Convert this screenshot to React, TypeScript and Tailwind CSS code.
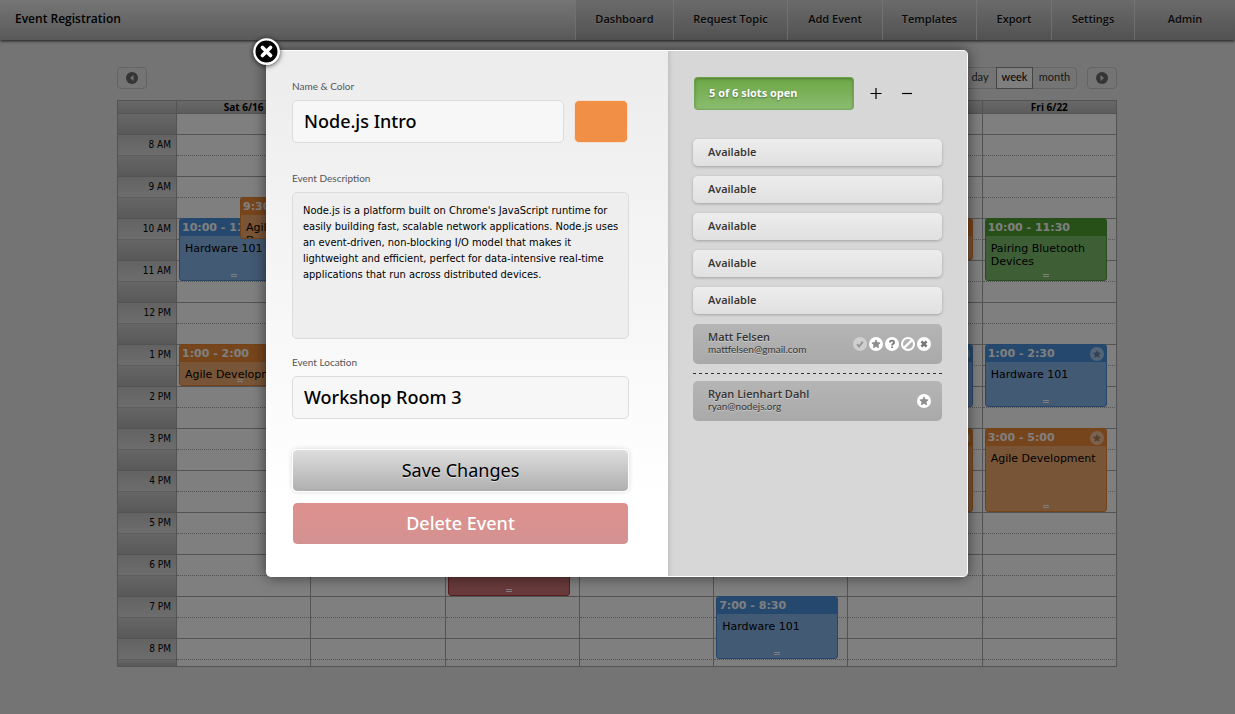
import React from 'react';

type Color = 'blue' | 'orange' | 'green' | 'red';

type CalendarEvent = {
  start: number;
  end: number;
  title: string;
  color: Color;
  starred?: boolean;
  place?: 'under' | 'over';
};

const FIRST_HOUR = 7.5;
const HOUR_HEIGHT = 42;

const navItems = [
  { label: 'Dashboard', width: 'w-[98px]' },
  { label: 'Request Topic', width: 'w-[114px]' },
  { label: 'Add Event', width: 'w-[95px]' },
  { label: 'Templates', width: 'w-[94px]' },
  { label: 'Export', width: 'w-[75px]' },
  { label: 'Settings', width: 'w-[83px]' },
  { label: 'Admin', width: 'w-[101px]' },
];

const days: { label: string; events: CalendarEvent[] }[] = [
  {
    label: 'Sat 6/16',
    events: [
      { start: 10, end: 11.5, title: 'Hardware 101', color: 'blue', place: 'under' },
      { start: 13, end: 14, title: 'Agile Development', color: 'orange' },
      { start: 9.5, end: 10.5, title: 'Agile Development', color: 'orange', place: 'over' },
    ],
  },
  { label: 'Sun 6/17', events: [] },
  { label: 'Mon 6/18', events: [{ start: 17, end: 19, title: 'Open Lab', color: 'red' }] },
  { label: 'Tue 6/19', events: [] },
  { label: 'Wed 6/20', events: [{ start: 19, end: 20.5, title: 'Hardware 101', color: 'blue' }] },
  {
    label: 'Thu 6/21',
    events: [
      { start: 10, end: 11, title: 'Agile Development', color: 'orange' },
      { start: 13, end: 14.5, title: 'Hardware 101', color: 'blue', starred: true },
      { start: 15, end: 17, title: 'Agile Development', color: 'orange', starred: true },
    ],
  },
  {
    label: 'Fri 6/22',
    events: [
      { start: 10, end: 11.5, title: 'Pairing Bluetooth Devices', color: 'green' },
      { start: 13, end: 14.5, title: 'Hardware 101', color: 'blue', starred: true },
      { start: 15, end: 17, title: 'Agile Development', color: 'orange', starred: true },
    ],
  },
];

const hours = ['8 AM', '9 AM', '10 AM', '11 AM', '12 PM', '1 PM', '2 PM', '3 PM', '4 PM', '5 PM', '6 PM', '7 PM', '8 PM'];

const eventBody: Record<Color, string> = {
  blue: 'bg-[#86b4e8] border-[#4b8fd6]',
  orange: 'bg-[#f2ab70] border-[#e8842f]',
  green: 'bg-[#7dbf6c] border-[#4f9a34]',
  red: 'bg-[#d07476] border-[#b03a3e]',
};

const eventHead: Record<Color, string> = {
  blue: 'bg-[#4b93dc]',
  orange: 'bg-[#ec8a38]',
  green: 'bg-[#4fa032]',
  red: 'bg-[#c0494c]',
};

const eventPlace = {
  full: 'left-0.5 right-2.5',
  under: 'left-0.5 right-[22px]',
  over: 'left-[63px] right-2.5',
};

const STAR = 'M7 2.9l1.25 2.6 2.85.4-2.05 2 .5 2.85L7 9.4l-2.55 1.35.5-2.85-2.05-2 2.85-.4z';

function formatHour(value: number) {
  const hour = Math.floor(value);
  const minutes = value % 1 ? '30' : '00';
  return `${hour > 12 ? hour - 12 : hour}:${minutes}`;
}

function EventCard({ event }: { event: CalendarEvent }) {
  return (
    <article
      className={`absolute overflow-hidden rounded-[3px] border font-['DejaVu_Sans',sans-serif] text-[11px] ${
        eventPlace[event.place ?? 'full']
      } ${eventBody[event.color]}`}
      style={{
        top: (event.start - FIRST_HOUR) * HOUR_HEIGHT,
        height: (event.end - event.start) * HOUR_HEIGHT,
      }}
    >
      <header className={`flex h-[17px] items-center justify-between whitespace-nowrap px-0.5 font-bold leading-4 text-white ${eventHead[event.color]}`}>
        <span>
          {formatHour(event.start)} - {formatHour(event.end)}
        </span>
        {event.starred && (
          <svg viewBox="0 0 14 14" className="size-3.5 shrink-0 opacity-50" aria-hidden="true">
            <circle cx="7" cy="7" r="7" fill="#fff" />
            <path d={STAR} fill="#777" />
          </svg>
        )}
      </header>
      <p className="px-[5px] pt-1.5 leading-[13px] text-black">{event.title}</p>
      <div className="absolute inset-x-0 bottom-[3px] flex flex-col items-center gap-px">
        <span className="h-px w-1.5 bg-white" />
        <span className="h-px w-1.5 bg-white" />
      </div>
    </article>
  );
}

function Calendar() {
  return (
    <section className="relative" aria-label="Week calendar">
      <table className="w-full table-fixed border-separate border-spacing-0 border-l border-t border-[#a6a6a6] bg-white">
        <thead>
          <tr className="bg-linear-to-b from-[#d2d2d2] to-[#b8b8b8]">
            <th className="h-[13px] w-[59px] border-b border-r border-[#a6a6a6] p-0" aria-label="Time" />
            {days.map((day) => (
              <th key={day.label} className="h-[13px] border-b border-r border-[#a6a6a6] p-0 text-[10px] font-bold leading-[12px]">
                {day.label}
              </th>
            ))}
          </tr>
        </thead>
        <tbody>
          <tr>
            <th className="h-[21px] border-b border-r border-[#a6a6a6] bg-linear-to-b from-[#cfcfcf] to-[#b4b4b4] p-0" aria-label="7:30 AM" />
            {days.map((day) => (
              <td key={day.label} className="border-b border-r border-[#a6a6a6] p-0" />
            ))}
          </tr>
          {hours.map((hour, index) => {
            const last = index === hours.length - 1;
            return (
              <React.Fragment key={hour}>
                <tr>
                  <th
                    scope="row"
                    className="h-[21px] border-b border-r border-b-[#b0b0b0] border-r-[#a6a6a6] bg-linear-to-b from-[#c6c6c6] to-[#dadada] p-0 pr-[5px] text-right font-['DejaVu_Sans_Condensed',sans-serif] text-[10px] font-normal leading-[18px] [border-bottom-style:dotted]"
                  >
                    {hour}
                  </th>
                  {days.map((day) => (
                    <td key={day.label} className="border-b border-r border-b-[#a6a6a6] border-r-[#a6a6a6] p-0 [border-bottom-style:dotted]" />
                  ))}
                </tr>
                <tr>
                  <th className={`border-b border-r border-[#a6a6a6] bg-linear-to-b from-[#cdcdcd] to-[#b2b2b2] p-0 ${last ? 'h-[7px]' : 'h-[21px]'}`} aria-hidden="true" />
                  {days.map((day) => (
                    <td key={day.label} className="border-b border-r border-[#a6a6a6] p-0" />
                  ))}
                </tr>
              </React.Fragment>
            );
          })}
        </tbody>
      </table>
      <div className="absolute inset-x-0 bottom-0 top-[13px] grid grid-cols-7 pl-[60px]">
        {days.map((day) => (
          <div key={day.label} className="relative">
            {day.events.map((event) => (
              <EventCard key={`${event.start}-${event.title}`} event={event} />
            ))}
          </div>
        ))}
      </div>
    </section>
  );
}

function PageArrow({ direction }: { direction: 'left' | 'right' }) {
  return (
    <button
      type="button"
      aria-label={direction === 'left' ? 'Previous week' : 'Next week'}
      className="flex h-[22px] w-[30px] items-center justify-center rounded border border-[#c8c8c8]"
    >
      <svg viewBox="0 0 12 12" className="size-3" aria-hidden="true">
        <circle cx="6" cy="6" r="6" fill="#6a6a6a" />
        <path d={direction === 'left' ? 'M7.5 3v6L4 6z' : 'M4.5 3v6L8 6z'} fill="#e2e2e2" />
      </svg>
    </button>
  );
}

function StatusIcon({ label, faded, children }: { label: string; faded?: boolean; children: React.ReactNode }) {
  return (
    <button type="button" aria-label={label} title={label} className={faded ? 'opacity-40' : ''}>
      <svg viewBox="0 0 14 14" className="size-3.5" aria-hidden="true">
        <circle cx="7" cy="7" r="7" fill="#fff" />
        {children}
      </svg>
    </button>
  );
}

function Attendee({ name, email, children }: { name: string; email: string; children: React.ReactNode }) {
  return (
    <div className="flex h-10 items-center justify-between rounded-[5px] bg-linear-to-b from-[#b5b5b5] to-[#a9a9a9] pl-[15px] pr-[11px]">
      <div className="pb-0.5 text-[#333] [text-shadow:0_1px_0_rgba(255,255,255,0.4)]">
        <p className="text-[11px] font-semibold leading-[13px]">{name}</p>
        <p className="font-['Lato',sans-serif] text-[10px] leading-[13px]">{email}</p>
      </div>
      <div className="flex items-center gap-0.5">{children}</div>
    </div>
  );
}

const starIcon = (
  <StatusIcon label="Organizer">
    <path d={STAR} fill="#8f8f8f" stroke="#8f8f8f" strokeWidth="0.8" strokeLinejoin="round" />
  </StatusIcon>
);

const labelClass = "block font-['Lato',sans-serif] text-[10px] leading-4 text-[#555]";
const inputClass =
  "block h-[43px] w-full min-w-0 rounded-[5px] border border-[#dcdcdc] bg-[#f7f7f7] px-[11px] pb-0.5 font-['Noto_Sans',sans-serif] text-lg font-medium text-black outline-none";

function EventDialog() {
  return (
    <div
      role="dialog"
      aria-label="Edit event"
      className="relative flex w-[702px] max-w-full rounded-[5px] shadow-[0_0_14px_rgba(0,0,0,0.55)]"
    >
      <button
        type="button"
        aria-label="Close"
        className="absolute -left-[13px] -top-3 rounded-full shadow-[0_1px_5px_rgba(0,0,0,0.7)]"
      >
        <svg viewBox="0 0 28 28" className="size-[27px]" aria-hidden="true">
          <circle cx="14" cy="14" r="12.6" fill="#000" stroke="#fff" strokeWidth="2.4" />
          <path d="M9.8 9.8l8.4 8.4M18.2 9.8l-8.4 8.4" stroke="#fff" strokeWidth="3.8" strokeLinecap="round" />
        </svg>
      </button>

      <form
        className="flex-1 rounded-l-[5px] border-t border-white bg-linear-to-b from-[#ececec] to-white to-85% px-[26px] pb-8 pt-[27px]"
        onSubmit={(e) => e.preventDefault()}
      >
        <div className="w-[337px] max-w-full">
          <label htmlFor="event-name" className={labelClass}>
            Name &amp; Color
          </label>
          <div className="mt-1.5 flex gap-2.5 pr-px">
            <input id="event-name" className={inputClass} defaultValue="Node.js Intro" />
            <button type="button" aria-label="Event color" className="h-[43px] w-[54px] shrink-0 rounded-[5px] border border-[#f3e3d4] bg-[#f08f45]" />
          </div>

          <label htmlFor="event-description" className={`${labelClass} mt-[27px]`}>
            Event Description
          </label>
          <textarea
            id="event-description"
            className="mt-1.5 block h-[147px] w-full resize-none rounded-[5px] border border-[#dcdcdc] bg-[#eee] py-2.5 pl-2.5 pr-1 font-['DejaVu_Sans_Condensed',sans-serif] text-[11px] leading-4 text-black outline-none"
            defaultValue="Node.js is a platform built on Chrome's JavaScript runtime for easily building fast, scalable network applications. Node.js uses an event-driven, non-blocking I/O model that makes it lightweight and efficient, perfect for data-intensive real-time applications that run across distributed devices."
          />

          <label htmlFor="event-location" className={`${labelClass} mt-[15px]`}>
            Event Location
          </label>
          <input id="event-location" className={`${inputClass} mt-1.5`} defaultValue="Workshop Room 3" />

          <button
            type="submit"
            className="mt-[30px] block h-[43px] w-full rounded-[5px] border border-white bg-linear-to-b from-[#dedede] to-[#afafaf] bg-clip-padding pb-0.5 font-['Noto_Sans',sans-serif] text-lg text-black shadow-[0_0_5px_rgba(0,0,0,0.15)] [text-shadow:0_1px_0_rgba(255,255,255,0.6)]"
          >
            Save Changes
          </button>
          <button
            type="button"
            className="mt-2.5 block h-[43px] w-full rounded-[5px] border border-white bg-linear-to-b from-[#de918e] to-[#d39291] bg-clip-padding pb-0.5 font-['Noto_Sans',sans-serif] text-lg font-medium text-white"
          >
            Delete Event
          </button>
        </div>
      </form>

      <aside className="w-[300px] rounded-r-[5px] border border-l-0 border-white bg-[#d7d7d7] px-[25px] pt-[26px] shadow-[inset_5px_0_5px_-4px_rgba(0,0,0,0.15)]">
        <div className="flex items-center pl-px text-black">
          <div className="flex h-[33px] w-40 items-center rounded border border-[#69a049]/60 bg-linear-to-b from-[#6ca644] to-[#8bbd70] bg-origin-border pl-3.5 text-[11px] font-bold text-white shadow-[inset_0_1px_3px_rgba(0,0,0,0.25)] [text-shadow:0_1px_2px_rgba(0,0,0,0.4)]">
            5 of 6 slots open
          </div>
          <button type="button" aria-label="Add slot" className="ml-4">
            <svg viewBox="0 0 12 12" className="size-3" aria-hidden="true">
              <path d="M0.5 5.5h11M6 0v11" stroke="#000" strokeWidth="1.2" />
            </svg>
          </button>
          <button type="button" aria-label="Remove slot" className="ml-[19px]">
            <svg viewBox="0 0 12 12" className="size-3" aria-hidden="true">
              <path d="M1 5.5h10" stroke="#000" strokeWidth="1.2" />
            </svg>
          </button>
        </div>

        <ul className="mt-[29px] flex flex-col gap-2.5">
          {[1, 2, 3, 4, 5].map((slot) => (
            <li
              key={slot}
              className="flex h-[27px] items-center rounded-[5px] bg-linear-to-b from-[#ededed] to-[#e0e0e0] pl-[15px] text-[11px] font-semibold text-[#333] shadow-[0_1px_3px_rgba(0,0,0,0.25)]"
            >
              Available
            </li>
          ))}
        </ul>

        <div className="mt-2.5">
          <Attendee name="Matt Felsen" email="mattfelsen@gmail.com">
            <StatusIcon label="Confirm" faded>
              <path d="M4 7.2l2.2 2.3L9.8 4.6" fill="none" stroke="#777" strokeWidth="2" />
            </StatusIcon>
            {starIcon}
            <StatusIcon label="Maybe">
              <path d="M4.9 5.6C4.9 2.9 9.1 3 9.1 5.4 9.1 6.9 7.1 6.8 7.1 8.5M7.1 9.5v1.6" fill="none" stroke="#777" strokeWidth="1.8" />
            </StatusIcon>
            <StatusIcon label="Decline">
              <circle cx="7" cy="7" r="5" fill="#b0b0b0" />
              <path d="M2.8 11.2l8.4-8.4" stroke="#fff" strokeWidth="2.4" />
            </StatusIcon>
            <StatusIcon label="Remove">
              <path d="M4.4 4.4l5.2 5.2M9.6 4.4L4.4 9.6" stroke="#777" strokeWidth="2.6" />
            </StatusIcon>
          </Attendee>
          <svg className="mb-[7px] mt-[9px] block h-px w-full" aria-hidden="true">
            <line x1="0" x2="100%" y1="0.5" y2="0.5" stroke="#333" strokeDasharray="3 3" />
          </svg>
          <Attendee name="Ryan Lienhart Dahl" email="ryan@nodejs.org">
            {starIcon}
          </Attendee>
        </div>
      </aside>
    </div>
  );
}

export default function App() {
  return (
    <div className="relative min-h-screen bg-[#e8e8e8] font-['Open_Sans',sans-serif] text-black">
      <header className="flex h-10 items-stretch justify-between bg-linear-to-b from-[#ececec] to-[#b4b4b4] shadow-[0_1px_3px_rgba(0,0,0,0.8)]">
        <h1 className="flex items-center pb-0.5 pl-[15px] text-xs font-semibold">Event Registration</h1>
        <nav className="flex bg-linear-to-b from-[#d6d6d6] to-[#a4a4a4]">
          {navItems.map((item) => (
            <a
              key={item.label}
              href="#"
              className={`flex items-center justify-center border-l border-[#efefef]/70 pb-0.5 text-[11px] font-semibold text-[#111] [text-shadow:0_1px_0_rgba(255,255,255,0.4)] ${item.width}`}
            >
              {item.label}
            </a>
          ))}
        </nav>
      </header>

      <main className="mx-auto max-w-[1001px] pb-12 pr-px pt-[27px]">
        <div className="flex items-center justify-between pb-[11px]">
          <PageArrow direction="left" />
          <div className="flex items-center gap-2.5">
            <div className="flex h-[22px] rounded border border-[#c8c8c8] font-['Lato',sans-serif] text-[11px] text-[#333]">
              <button type="button" className="w-8 pb-px">day</button>
              <button type="button" className="-my-px w-[37px] border border-[#8a8a8a] bg-white pb-px text-black">week</button>
              <button type="button" className="w-[43px] pb-px">month</button>
            </div>
            <PageArrow direction="right" />
          </div>
        </div>
        <Calendar />
      </main>

      <div className="absolute inset-0 flex items-start justify-center bg-black/50 pr-px pt-[50px]">
        <EventDialog />
      </div>
    </div>
  );
}
